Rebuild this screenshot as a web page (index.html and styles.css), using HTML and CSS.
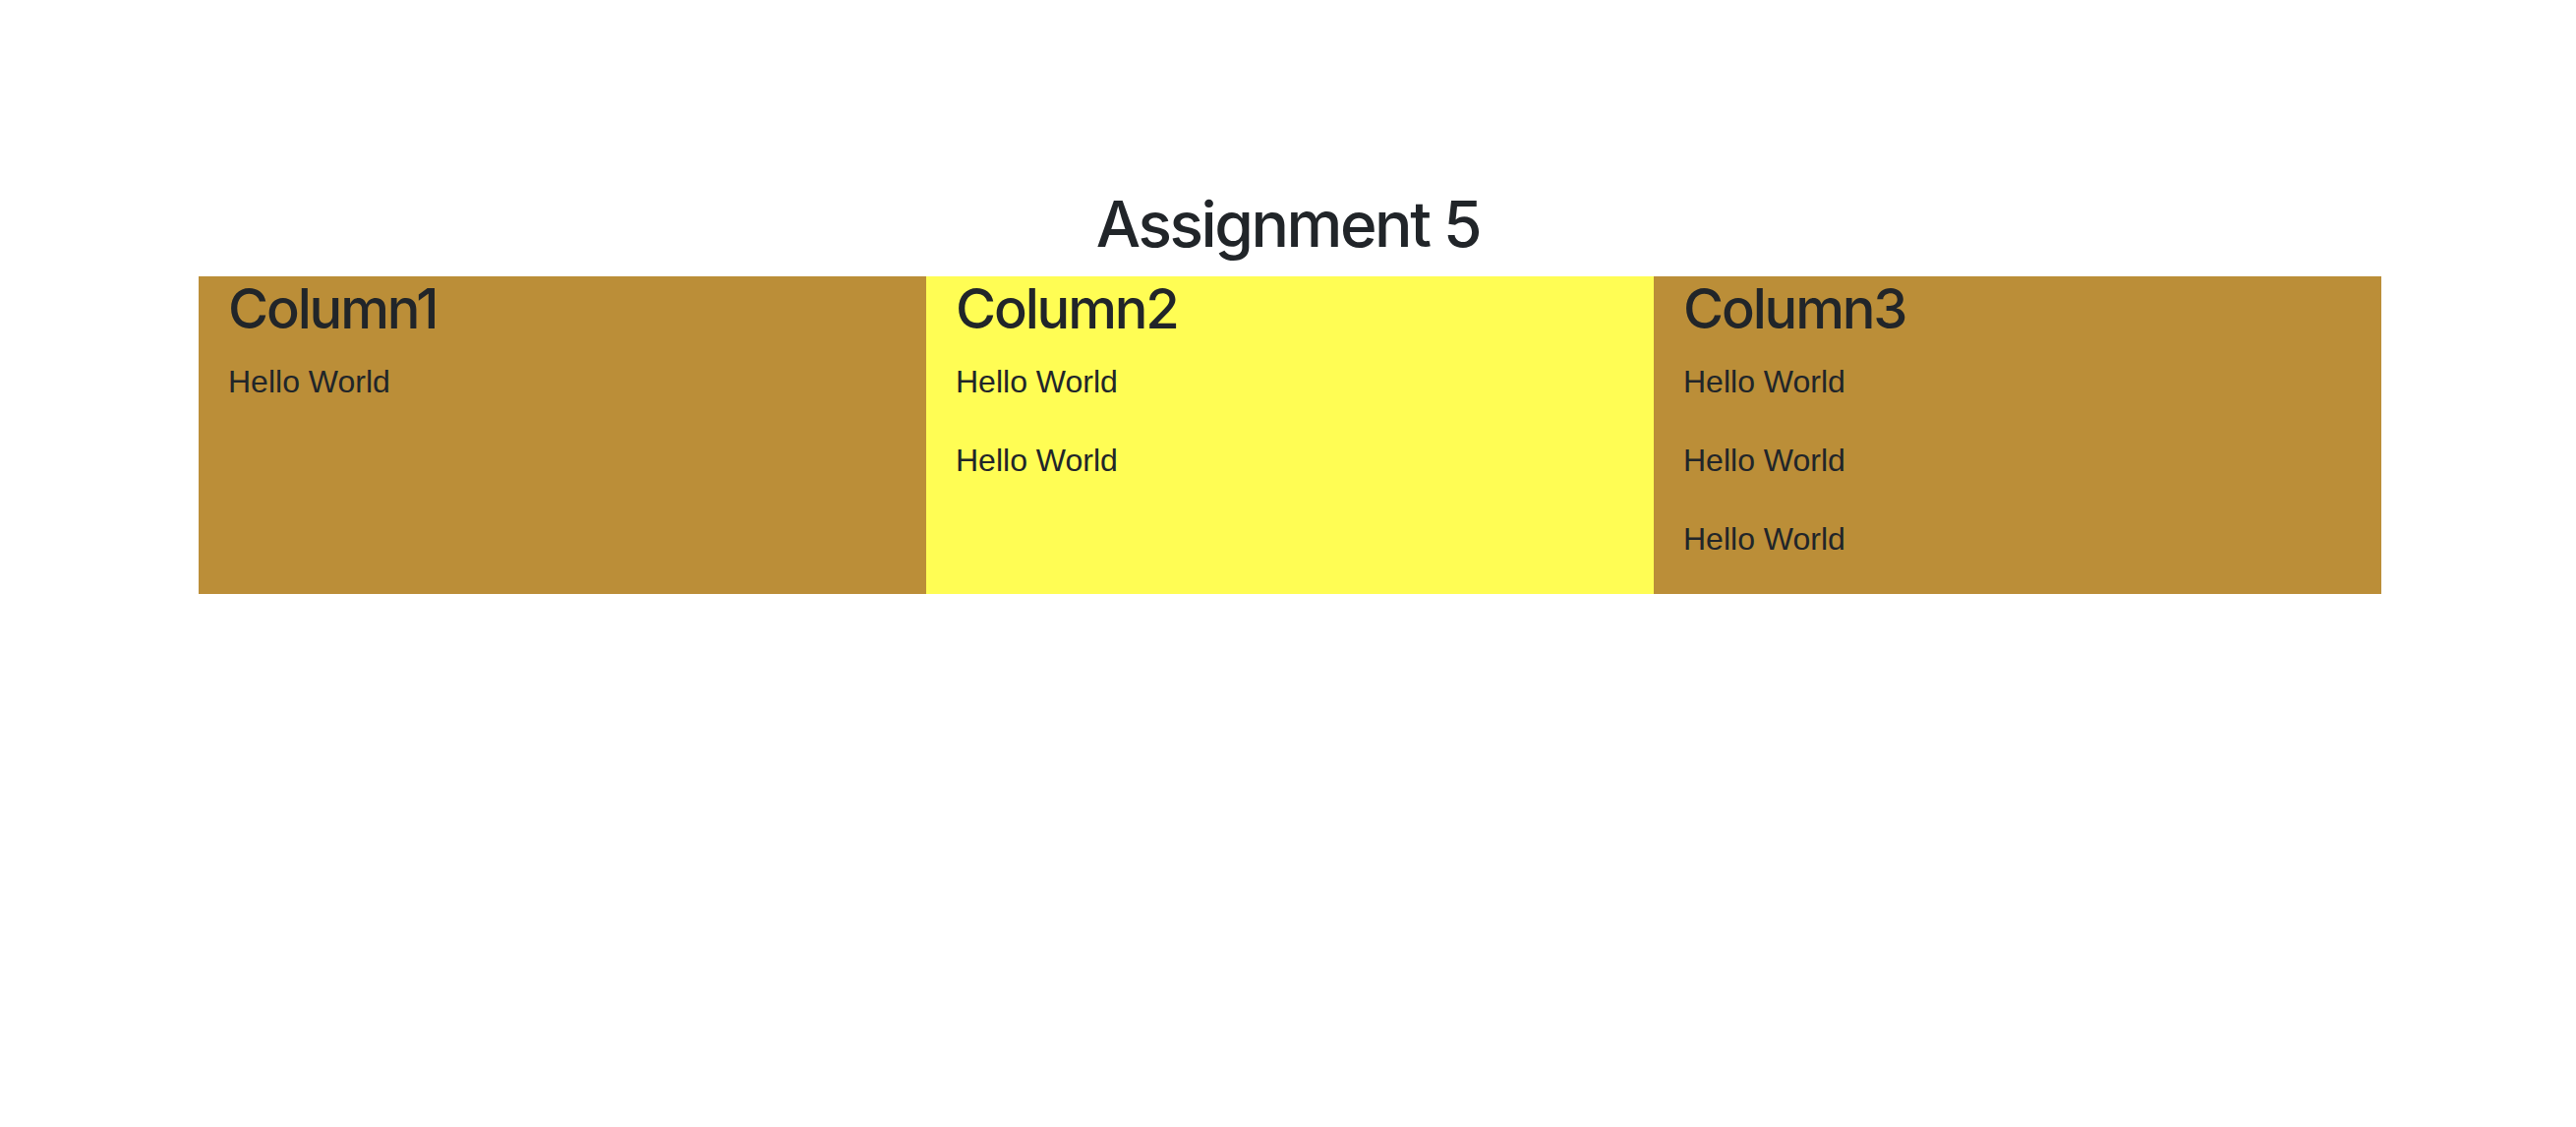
FILE: index.html
```html
<!DOCTYPE html>
<html>
<head>
  <meta charset="utf-8">
  <title>Assignment 5</title>
  <link rel="stylesheet" href="styles.css">
</head>
<body>
  <div class="page">
    <h2 class="title">Assignment 5</h2>
    <div class="columns">
      <div class="col col-gold">
        <h3>Column1</h3>
        <p>Hello World</p>
      </div>
      <div class="col col-yellow">
        <h3>Column2</h3>
        <p>Hello World</p>
        <p>Hello World</p>
      </div>
      <div class="col col-gold">
        <h3>Column3</h3>
        <p>Hello World</p>
        <p>Hello World</p>
        <p>Hello World</p>
      </div>
    </div>
  </div>
</body>
</html>
```

FILE: styles.css
```css
body {
  margin: 0;
  font-family: "Liberation Sans", Arial, sans-serif;
  color: #212529;
  background: #fff;
}
.page {
  padding-top: 190px;
}
.title,
.col h3 {
  font-family: Inter, "Liberation Sans", sans-serif;
  font-weight: 500;
  line-height: 1.2;
  letter-spacing: -0.038em;
}
.title {
  font-size: 64px;
  text-align: center;
  margin: 0 0 14px;
}
.columns {
  display: flex;
  width: 2220px;
  margin: 0 198px 0 202px;
}
.col {
  flex: 1;
  padding: 0 30px;
  display: flex;
  flex-direction: column;
}
.col h3 {
  font-size: 56px;
  margin: 0 0 16px;
}
.col p {
  font-size: 32px;
  line-height: 1.5;
  margin: 0 0 32px;
}
.col-gold {
  background: #bb8e38;
}
.col-yellow {
  background: #fffd54;
}
```
